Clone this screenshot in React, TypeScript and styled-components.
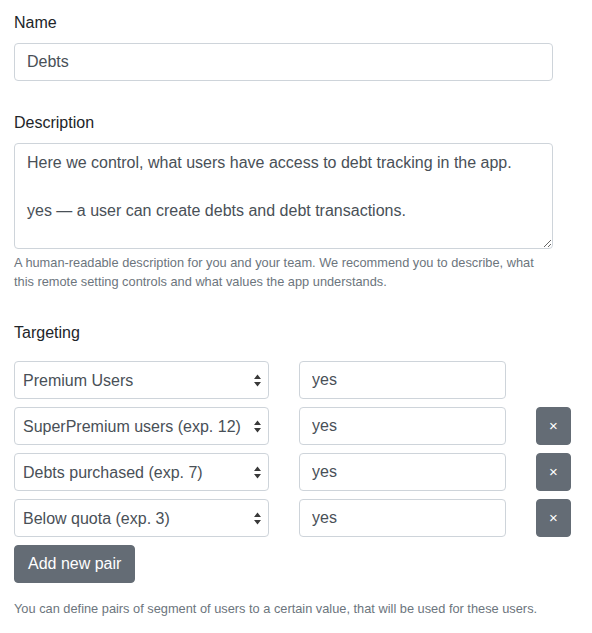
import styled, { createGlobalStyle } from 'styled-components';

const GlobalStyle = createGlobalStyle`
  body {
    margin: 0;
    background: #fff;
    font-family: "Liberation Sans", Arial, Helvetica, sans-serif;
    color: #212529;
  }
  * {
    box-sizing: border-box;
  }
`;

const Page = styled.form`
  padding: 11px 14px 10px;
  width: 592px;
`;

const Group = styled.div<{ $width?: number }>`
  width: ${(p) => (p.$width ? `${p.$width}px` : 'auto')};
  margin-bottom: 30px;
`;

const Label = styled.label<{ $gap?: number }>`
  display: block;
  font-size: 16px;
  line-height: 24px;
  margin-bottom: ${(p) => p.$gap ?? 8}px;
  color: #212529;
`;

const TextInput = styled.input<{ $width?: number }>`
  display: block;
  width: ${(p) => (p.$width ? `${p.$width}px` : '100%')};
  height: 38px;
  padding: 6px 12px;
  font-family: inherit;
  font-size: 16px;
  line-height: 24px;
  color: #495057;
  background: #fff;
  border: 1px solid #ced4da;
  border-radius: 4px;
  outline: none;
`;

const TextArea = styled.textarea`
  display: block;
  width: 100%;
  height: 106px;
  padding: 7px 12px 6px;
  font-family: inherit;
  font-size: 16px;
  line-height: 24px;
  color: #495057;
  background: #fff;
  border: 1px solid #ced4da;
  border-radius: 4px;
  outline: none;
  resize: vertical;
`;

const Help = styled.small<{ $top?: number }>`
  display: block;
  margin-top: ${(p) => p.$top ?? 4}px;
  font-size: 12.8px;
  line-height: 19.2px;
  color: #6c757d;
`;

const Pairs = styled.div`
  display: flex;
  flex-direction: column;
  gap: 8px;
`;

const PairRow = styled.div`
  display: grid;
  grid-template-columns: 255px 207px 35px;
  column-gap: 30px;
  align-items: center;
`;

const arrows = encodeURIComponent(
  '<svg xmlns="http://www.w3.org/2000/svg" width="7" height="13" viewBox="0 0 7 13"><path d="M3.5 0.5 L7 5 H0 Z M3.5 12.5 L7 8 H0 Z" fill="#3a3a3a"/></svg>'
);

const Select = styled.select`
  display: block;
  width: 100%;
  height: 38px;
  padding: 0 24px 0 8px;
  font-family: inherit;
  font-size: 16px;
  color: #495057;
  background: #fff url("data:image/svg+xml,${arrows}") no-repeat right 7px center;
  border: 1px solid #ced4da;
  border-radius: 4px;
  appearance: none;
  outline: none;
`;

const Button = styled.button<{ $square?: boolean }>`
  height: 38px;
  padding: ${(p) => (p.$square ? '0' : '6px 13px')};
  width: ${(p) => (p.$square ? '35px' : 'auto')};
  font-family: inherit;
  font-size: ${(p) => (p.$square ? '15px' : '16px')};
  line-height: 24px;
  color: #fff;
  background: #646c75;
  border: 1px solid #646c75;
  border-radius: 4px;
  cursor: pointer;
`;

const AddRow = styled.div`
  margin-top: 8px;
`;

const segments = [
  { name: 'Premium Users', removable: false },
  { name: 'SuperPremium users (exp. 12)', removable: true },
  { name: 'Debts purchased (exp. 7)', removable: true },
  { name: 'Below quota (exp. 3)', removable: true },
];

export default function App() {
  return (
    <>
      <GlobalStyle />
      <Page onSubmit={(e) => e.preventDefault()}>
        <Group $width={539}>
          <Label>Name</Label>
          <TextInput defaultValue="Debts" />
        </Group>

        <Group $width={539}>
          <Label>Description</Label>
          <TextArea
            defaultValue={
              'Here we control, what users have access to debt tracking in the app.\n\nyes — a user can create debts and debt transactions.'
            }
          />
          <Help>
            A human-readable description for you and your team. We recommend you to describe, what
            this remote setting controls and what values the app understands.
          </Help>
        </Group>

        <div>
          <Label $gap={16}>Targeting</Label>
          <Pairs>
            {segments.map((s) => (
              <PairRow key={s.name}>
                <Select defaultValue={s.name}>
                  <option>{s.name}</option>
                </Select>
                <TextInput defaultValue="yes" />
                {s.removable ? (
                  <Button type="button" $square>
                    ×
                  </Button>
                ) : (
                  <span />
                )}
              </PairRow>
            ))}
          </Pairs>
          <AddRow>
            <Button type="button">Add new pair</Button>
          </AddRow>
          <Help $top={16}>
            You can define pairs of segment of users to a certain value, that will be used for these users.
          </Help>
        </div>
      </Page>
    </>
  );
}
